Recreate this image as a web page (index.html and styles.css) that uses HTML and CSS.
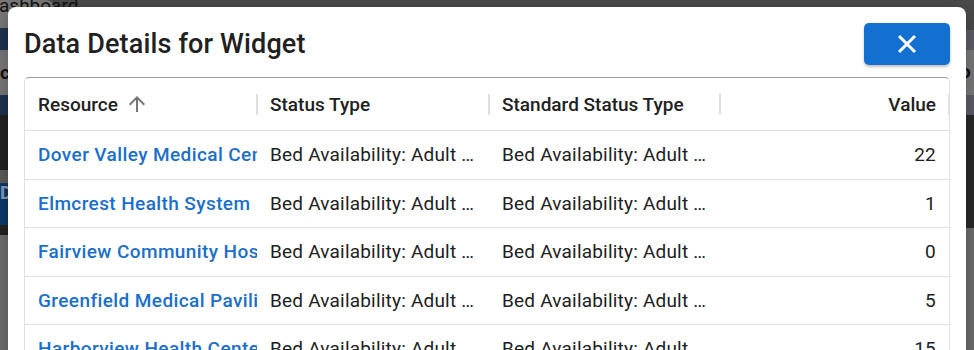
FILE: index.html
```html
<!DOCTYPE html>
<html lang="en">
<head>
    <meta charset="UTF-8">
    <title>Data Details for Widget</title>
    <link rel="stylesheet" href="styles.css">
</head>
<body>
    <div class="backdrop">
        <div class="side side-left">
            <div class="band tab"><span class="tab-text">ashboard</span></div>
            <div class="band navy h22"></div>
            <div class="band grey h45"><span class="peek">c</span></div>
            <div class="band navy h20"></div>
            <div class="band black h55"></div>
            <div class="band mid h13"></div>
            <div class="band blue h42"><span class="peek faint">D</span></div>
            <div class="band black h10"></div>
            <div class="band dim fill"></div>
        </div>
        <div class="side side-right">
            <div class="band dark h30"></div>
            <div class="band slate h20"></div>
            <div class="band grey h45"><span class="peek">o</span></div>
            <div class="band slate h20"></div>
            <div class="band black2 h113"></div>
            <div class="band dim fill"></div>
        </div>
    </div>

    <div class="dialog">
        <div class="dialog-head">
            <h2 class="dialog-title">Data Details for Widget</h2>
            <button class="close-btn" aria-label="Close">
                <svg width="20" height="20" viewBox="0 0 20 20"><path stroke="#fff" stroke-width="3" d="M2 2L18 18M18 2L2 18"/></svg>
            </button>
        </div>

        <div class="grid">
            <div class="grid-row grid-header">
                <div class="cell">Resource
                    <svg class="sort-icon" width="24" height="24" viewBox="0 0 24 24"><path fill="#757575" d="M4 12l1.41 1.41L11 7.83V20h2V7.83l5.58 5.59L20 12l-8-8-8 8z"/></svg>
                    <span class="sep"></span>
                </div>
                <div class="cell">Status Type<span class="sep"></span></div>
                <div class="cell">Standard Status Type<span class="sep"></span></div>
                <div class="cell num">Value<span class="sep"></span></div>
            </div>

            <div class="grid-row">
                <div class="cell link">Dover Valley Medical Center</div>
                <div class="cell ell">Bed Availability: Adult ICU Beds</div>
                <div class="cell ell ell-std">Bed Availability: Adult ICU Beds</div>
                <div class="cell num">22</div>
            </div>
            <div class="grid-row">
                <div class="cell link">Elmcrest Health System</div>
                <div class="cell ell">Bed Availability: Adult ICU Beds</div>
                <div class="cell ell ell-std">Bed Availability: Adult ICU Beds</div>
                <div class="cell num">1</div>
            </div>
            <div class="grid-row">
                <div class="cell link">Fairview Community Hospital</div>
                <div class="cell ell">Bed Availability: Adult ICU Beds</div>
                <div class="cell ell ell-std">Bed Availability: Adult ICU Beds</div>
                <div class="cell num">0</div>
            </div>
            <div class="grid-row">
                <div class="cell link">Greenfield Medical Pavilion</div>
                <div class="cell ell">Bed Availability: Adult ICU Beds</div>
                <div class="cell ell ell-std">Bed Availability: Adult ICU Beds</div>
                <div class="cell num">5</div>
            </div>
            <div class="grid-row">
                <div class="cell link">Harborview Health Center</div>
                <div class="cell ell">Bed Availability: Adult ICU Beds</div>
                <div class="cell ell ell-std">Bed Availability: Adult ICU Beds</div>
                <div class="cell num">15</div>
            </div>
        </div>
    </div>
</body>
</html>
```

FILE: styles.css
```css
html, body {
    margin: 0;
    height: 100%;
    overflow: hidden;
}
body {
    font-family: Roboto, "Liberation Sans", sans-serif;
    background-color: #4b4b4b;
    position: relative;
}

/* dimmed page behind the dialog */
.backdrop {
    display: flex;
    justify-content: space-between;
    height: 100%;
}
.side {
    display: flex;
    flex-direction: column;
}
.side-left {
    width: 60px;
}
.side-right {
    width: 14px;
}
.band {
    position: relative;
}
.tab {
    height: 28px;
    width: 54px;
    background-color: #7a7a7a;
    border-top-right-radius: 8px;
}
.tab-text {
    font-size: 19px;
    line-height: 16px;
    color: #141414;
    display: block;
    white-space: nowrap;
    margin-left: -1px;
    margin-top: -2px;
}
.h10 { height: 10px; }
.h13 { height: 13px; }
.h20 { height: 20px; }
.h22 { height: 22px; }
.h30 { height: 30px; }
.h42 { height: 42px; }
.h45 { height: 45px; }
.h55 { height: 55px; }
.h113 { height: 113px; }
.fill { flex: 1; }
.navy { background-color: #1f3450; }
.grey { background-color: #7a7a7a; }
.black { background-color: #232323; }
.black2 { background-color: #2a2a2a; }
.mid { background-color: #5e5e5e; }
.blue { background-color: #0d3a6c; }
.dark { background-color: #4b4b4b; }
.slate { background-color: #5d5e68; }
.dim { background-color: #6f6f6f; }
.peek {
    display: block;
    font-size: 19px;
    font-weight: 700;
    color: #111;
    line-height: 45px;
}
.side-right .peek {
    line-height: 44px;
}
.peek.faint {
    color: #8aa0bb;
    line-height: 20px;
}

/* dialog */
.dialog {
    position: absolute;
    top: 7px;
    left: 8px;
    right: 8px;
    bottom: -20px;
    background-color: #fff;
    border-radius: 8px;
    padding: 16px 16px 0 16px;
    box-shadow: 0 4px 20px rgba(0,0,0,0.3);
}
.dialog-head {
    display: flex;
    justify-content: space-between;
    align-items: center;
    height: 42px;
    margin-bottom: 12px;
}
.dialog-title {
    margin: 0;
    font-size: 27px;
    font-weight: 500;
    color: #212121;
    letter-spacing: 0.15px;
}
.close-btn {
    width: 86px;
    height: 42px;
    border: none;
    border-radius: 5px;
    background-color: #1470d0;
    box-shadow: 0 2px 3px rgba(0,0,0,0.25);
    display: flex;
    align-items: center;
    justify-content: center;
    padding: 0;
}

/* table */
.grid {
    border: 1px solid #e0e0e0;
    border-top: 1px solid #9e9e9e;
    border-radius: 5px 5px 0 0;
}
.grid-row {
    display: grid;
    grid-template-columns: 232px 232px 231px 1fr;
    height: 48.5px;
    border-bottom: 1px solid #e0e0e0;
    box-sizing: border-box;
    font-size: 19px;
    letter-spacing: 0.2px;
    color: #212121;
}
.grid-header {
    height: 53px;
    font-weight: 500;
    letter-spacing: 0;
}
.cell {
    position: relative;
    display: flex;
    align-items: center;
    padding-left: 13px;
    white-space: nowrap;
    overflow: hidden;
}
.grid-header .cell {
    overflow: visible;
}
.sort-icon {
    margin-left: 7px;
}
.sep {
    position: absolute;
    right: -1px;
    top: 16px;
    width: 2px;
    height: 21px;
    background-color: #e0e0e0;
}
.link {
    color: #1a6fcc;
    font-weight: 500;
    letter-spacing: 0.4px;
}
.ell {
    display: block;
    line-height: 47.5px;
    text-overflow: ellipsis;
    padding-right: 15px;
}
.ell-std {
    padding-right: 13px;
}
.num {
    justify-content: flex-end;
    padding-right: 13px;
}
```
